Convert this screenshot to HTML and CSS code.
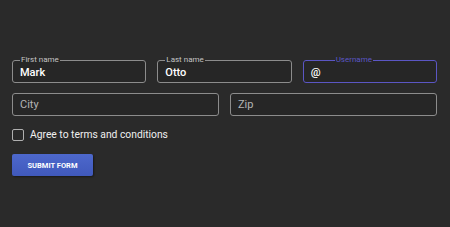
FILE: index.html
```html
<!DOCTYPE html>
<html>
<head>
<meta charset="utf-8">
<link rel="stylesheet" href="styles.css">
</head>
<body>
<form class="form">
  <div class="row three">
    <fieldset class="field">
      <legend class="legend">First name</legend>
      <span class="value">Mark</span>
    </fieldset>
    <fieldset class="field">
      <legend class="legend">Last name</legend>
      <span class="value">Otto</span>
    </fieldset>
    <fieldset class="field focus">
      <legend class="legend">Username</legend>
      <span class="value at">@</span>
    </fieldset>
  </div>
  <div class="row two">
    <div class="field plain"><span class="placeholder">City</span></div>
    <div class="field plain"><span class="placeholder">Zip</span></div>
  </div>
  <label class="check"><span class="box"></span><span class="check-text">Agree to terms and conditions</span></label>
  <div class="actions"><span class="btn">SUBMIT FORM</span></div>
</form>
</body>
</html>
```
FILE: styles.css
```css
html, body {
  margin: 0;
  padding: 0;
  background: #2a2a2a;
  width: 450px;
  height: 227px;
  overflow: hidden;
  font-family: Roboto, "Liberation Sans", sans-serif;
}
.form {
  padding: 56px 13px 0 12px;
  display: flex;
  flex-direction: column;
}
.row {
  display: grid;
  column-gap: 11px;
}
.three { grid-template-columns: 1fr 1fr 1fr; }
.two { grid-template-columns: 1fr 1fr; margin-top: 10px; }
.field {
  margin: 0;
  min-width: 0;
  box-sizing: border-box;
  border: 1px solid #8c8c8c;
  border-radius: 3px;
  background: #262626;
  padding: 0 7px;
  height: 27px;
  display: flex;
  align-items: center;
}
fieldset.field {
  padding-top: 0;
  padding-bottom: 2px;
}
.legend {
  font-size: 8px;
  line-height: 8px;
  color: #c4c4c4;
  padding: 0 1px;
  margin-left: 0;
}
.value {
  font-size: 11px;
  font-weight: 500;
  color: #ffffff;
}
.focus {
  border-color: #5b56c4;
}
.focus .legend {
  color: #5b56c4;
  margin-left: 24px;
}
.plain {
  height: 23px;
}
.placeholder {
  font-size: 11px;
  color: #b4b4b4;
}
.check {
  display: flex;
  align-items: center;
  margin-top: 12px;
  gap: 6px;
}
.box {
  width: 10px;
  height: 10px;
  border: 1px solid #b0b0b0;
  border-radius: 2px;
}
.check-text {
  font-size: 10.3px;
  color: #f0f0f0;
}
.actions {
  margin-top: 13px;
  display: flex;
}
.btn {
  width: 81px;
  height: 22px;
  box-sizing: border-box;
  display: flex;
  align-items: center;
  justify-content: center;
  background: linear-gradient(#4d68cc, #4059bc);
  color: #ffffff;
  font-size: 7.5px;
  font-weight: 700;
  border-radius: 2px;
  box-shadow: 1px 1px 2px rgba(0,0,0,0.4);
}
```
